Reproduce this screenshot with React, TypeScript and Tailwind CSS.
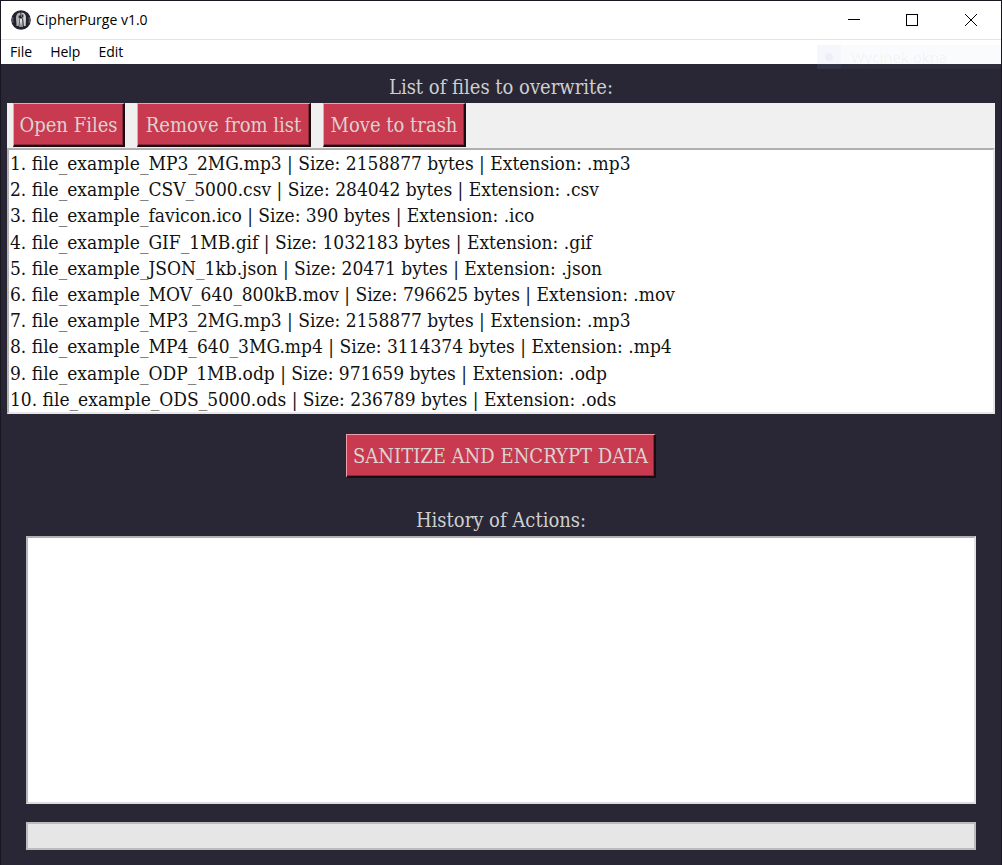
import { useState } from "react";

const files = [
  { name: "file_example_MP3_2MG.mp3", size: 2158877, ext: ".mp3" },
  { name: "file_example_CSV_5000.csv", size: 284042, ext: ".csv" },
  { name: "file_example_favicon.ico", size: 390, ext: ".ico" },
  { name: "file_example_GIF_1MB.gif", size: 1032183, ext: ".gif" },
  { name: "file_example_JSON_1kb.json", size: 20471, ext: ".json" },
  { name: "file_example_MOV_640_800kB.mov", size: 796625, ext: ".mov" },
  { name: "file_example_MP3_2MG.mp3", size: 2158877, ext: ".mp3" },
  { name: "file_example_MP4_640_3MG.mp4", size: 3114374, ext: ".mp4" },
  { name: "file_example_ODP_1MB.odp", size: 971659, ext: ".odp" },
  { name: "file_example_ODS_5000.ods", size: 236789, ext: ".ods" },
];

const raised =
  "h-11 shrink-0 whitespace-nowrap border-t border-l border-r-2 border-b-2 border-t-[#f0a0a9] border-l-[#f0a0a9] border-r-[#1c0c12] border-b-[#1c0c12] bg-[#c73a4f] text-center text-[20px] text-[#dcd3d1] shadow-[inset_-1px_-1px_0_#842a3a]";

function AppIcon() {
  return (
    <svg viewBox="0 0 20 20" className="size-5" aria-hidden="true">
      <circle cx="10" cy="10" r="9.8" fill="#22222f" />
      <path d="M5 8 Q5 3 9.4 2.6 V5 L8.6 8 L7.6 16 H5.6 Z" fill="#b4b4b7" />
      <path d="M10.4 2.6 Q15 3 15 8 L14.6 16 H12.8 L12.2 9 L10.6 7 Z" fill="#d2d2d3" />
      <path d="M8.9 8.4 H11.2 L11.6 17 H10.5 L10 11.5 L9.5 17 H8.4 Z" fill="#dedede" />
      <path d="M7.6 5.4 H9 V8 H7.6 Z M11 4.6 H12.4 V7.4 H11 Z" fill="#30303b" />
      <path d="M1.8 7 V13 M18.2 7 V13" stroke="#777782" strokeWidth="0.8" />
    </svg>
  );
}

export default function App() {
  const [history, setHistory] = useState("");
  return (
    <div className="flex min-h-screen flex-col border-x border-t border-[#18171f] bg-[#292735] font-['DejaVu_Serif_Condensed','DejaVu_Serif',serif] text-[20px]">
      <div className="relative bg-white font-['Open_Sans','Noto_Sans',sans-serif] text-black">
        <header className="flex h-[39px] items-center justify-between border-b border-[#e4e4e4] pl-[10px]">
          <div className="flex items-center gap-[5px]">
            <AppIcon />
            <h1 className="text-[14px] leading-5">CipherPurge v1.0</h1>
          </div>
          <div className="flex">
            <button type="button" aria-label="Minimize" className="flex h-[38px] w-[58px] items-center justify-center">
              <svg viewBox="0 0 12 12" className="size-3" shapeRendering="crispEdges"><path d="M0 5.5H12" stroke="#000" /></svg>
            </button>
            <button type="button" aria-label="Maximize" className="flex h-[38px] w-[58px] items-center justify-center">
              <svg viewBox="0 0 12 12" className="size-3" shapeRendering="crispEdges"><path d="M.5 .5H11.5V11.5H.5Z" fill="none" stroke="#000" /></svg>
            </button>
            <button type="button" aria-label="Close" className="flex h-[38px] w-[60px] items-center justify-center">
              <svg viewBox="0 0 12 12" className="size-3"><path d="M0 0L12 12M12 0L0 12" stroke="#000" /></svg>
            </button>
          </div>
        </header>
        <nav aria-label="Menu" className="flex h-6 items-center gap-[18px] px-[9px] text-[14px] leading-5">
          <button type="button">File</button>
          <button type="button">Help</button>
          <button type="button">Edit</button>
        </nav>
        <div className="pointer-events-none absolute top-11 right-0 flex h-6 w-[184px] items-center gap-[10px] bg-[#9fb4dc]/5 text-[15px] text-black/5">
          <span className="flex size-6 items-center justify-center bg-[#8cc8ff]/5">
            <span className="size-2 rounded-full bg-black/3" />
          </span>
          Wycinek okna
        </div>
      </div>

      <main className="flex flex-1 flex-col px-[6px] pt-2 pb-[15px]">
        <h2 className="h-[31px] text-center leading-[31px] text-[#d0cfcf]">List of files to overwrite:</h2>
        <section aria-label="Files" className="bg-[#f0f0f0]">
          <div className="flex gap-3 px-[6px] pb-px">
            <button type="button" className={`${raised} w-[112px]`}>Open Files</button>
            <button type="button" className={`${raised} w-[174px]`}>Remove from list</button>
            <button type="button" className={`${raised} w-[143px]`}>Move to trash</button>
          </div>
          <ol className="grid h-[266px] auto-rows-fr border-2 border-t-[#b0b0b0] border-r-[#e6e6e6] border-b-[#e6e6e6] border-l-[#b4b4b4] bg-white pl-px text-[19px] text-[#111111]">
            {files.map((f, i) => (
              <li key={i} className="flex items-center whitespace-nowrap leading-[26px]">
                {`${i + 1}. ${f.name} | Size: ${f.size} bytes | Extension: ${f.ext}`}
              </li>
            ))}
          </ol>
        </section>

        <button type="button" className={`${raised} mt-5 w-[310px] self-center`}>SANITIZE AND ENCRYPT DATA</button>

        <div className="mt-[27px] flex flex-1 flex-col px-[19px]">
          <label htmlFor="history" className="h-[31px] text-center leading-[31px] text-[#d0cfcf]">History of Actions:</label>
          <textarea
            id="history"
            value={history}
            onChange={(e) => setHistory(e.target.value)}
            className="min-h-[120px] w-full flex-1 resize-none border-2 border-t-[#b2b0b4] border-r-[#e2e2e4] border-b-[#dcdcde] border-l-[#b8b8ba] bg-white p-1 text-[19px] text-[#111111] outline-none"
          />
          <div
            role="progressbar"
            aria-label="Progress"
            aria-valuenow={0}
            className="mt-[18px] h-7 border-2 border-[#bcbcbc] bg-[#e6e6e6]"
          />
        </div>
      </main>
    </div>
  );
}
